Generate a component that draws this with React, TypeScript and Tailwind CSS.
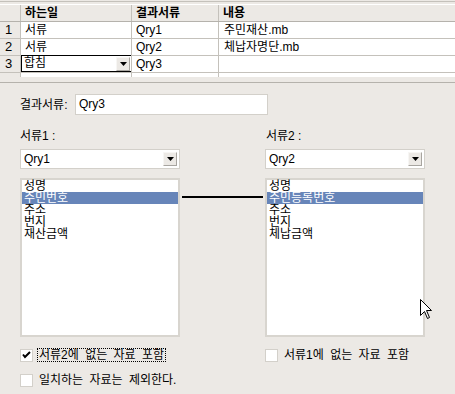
import React from 'react';

const font = "font-['Liberation_Sans','Noto_Sans_CJK_KR',sans-serif]";

const Arrow: React.FC = () => (
  <svg width="7" height="4" viewBox="0 0 7 4">
    <path d="M0 0h7L3.5 4z" fill="#000" />
  </svg>
);

const DropButton: React.FC = () => (
  <div className="w-[14px] h-[14px] flex items-center justify-center bg-[#ece9e5] border border-t-[#f7f6f4] border-l-[#f7f6f4] border-b-[#a8a5a0] border-r-[#a8a5a0]">
    <Arrow />
  </div>
);

const rows = [
  { n: '1', task: '서류', result: 'Qry1', content: '주민재산.mb' },
  { n: '2', task: '서류', result: 'Qry2', content: '체납자명단.mb' },
  { n: '3', task: '합침', result: 'Qry3', content: '' },
];

const Grid: React.FC = () => (
  <div className="h-[82px] border-b border-[#b5b2ac]">
    <div className="mt-[1px] border-t border-[#c4c1bb] pt-[2px]">
      <div className="grid grid-cols-[21px_111px_87px_1fr] h-[18px] border-t border-white border-b border-b-[#b5b2ac] font-bold">
        <div className="border-r border-[#c4c1bb]" />
        <div className="border-r border-[#c4c1bb] pl-[4px] leading-[16px]">하는일</div>
        <div className="border-r border-[#c4c1bb] pl-[4px] leading-[16px]">결과서류</div>
        <div className="pl-[4px] leading-[16px]">내용</div>
      </div>
      {rows.map((r) => (
        <div key={r.n} className="grid grid-cols-[21px_111px_87px_1fr] h-[17px] border-b border-[#c4c1bb]">
          <div className="border-r border-[#c4c1bb] pl-[5px] leading-[16px] text-[13px]">{r.n}</div>
          {r.n === '3' ? (
            <div className="border-r border-[#c4c1bb] bg-white">
              <div className="h-[17px] -mt-[1px] border border-black border-r-0 flex items-center justify-between pl-[2px] pr-[1px]">
                <span className="leading-[15px]">{r.task}</span>
                <DropButton />
              </div>
            </div>
          ) : (
            <div className="border-r border-[#c4c1bb] bg-white pl-[4px] leading-[16px]">{r.task}</div>
          )}
          <div className="border-r border-[#c4c1bb] bg-white pl-[4px] leading-[16px]">{r.result}</div>
          <div className="bg-white pl-[5px] leading-[16px]">{r.content}</div>
        </div>
      ))}
      <div className="grid grid-cols-[21px_111px_87px_1fr] h-[4px]">
        <div className="border-r border-[#c4c1bb]" />
        <div className="border-r border-[#c4c1bb] bg-white" />
        <div className="border-r border-[#c4c1bb] bg-white" />
        <div className="bg-white" />
      </div>
    </div>
  </div>
);

const Select: React.FC<{ value: string }> = ({ value }) => (
  <div className="mt-[6px] h-[20px] bg-white border border-[#d3d0ca] flex items-center justify-between pl-[3px] pr-[2px]">
    <span>{value}</span>
    <DropButton />
  </div>
);

const ListBox: React.FC<{ items: string[]; selected: number }> = ({ items, selected }) => (
  <div className="mt-[9px] h-[159px] bg-white border-2 border-[#d8d5cf] leading-[12px]">
    {items.map((it, i) => (
      <div
        key={it}
        className={`h-[12px] pl-[2px] ${i === selected ? 'bg-[#6785b9] text-white' : 'text-black'}`}
      >
        {it}
      </div>
    ))}
  </div>
);

const Check: React.FC<{ checked?: boolean; label: string; focus?: boolean; className?: string }> = ({
  checked,
  label,
  focus,
  className,
}) => (
  <div className={`flex items-center h-[14px] ${className ?? ''}`}>
    <div className="w-[13px] h-[13px] shrink-0 bg-white border border-[#d3d0ca] flex items-center justify-center">
      {checked && (
        <svg width="9" height="8" viewBox="0 0 9 8">
          <path d="M1 3.5l2 2.5L8 1" stroke="#000" strokeWidth="2" fill="none" />
        </svg>
      )}
    </div>
    <span
      className={`ml-[4px] leading-[12px] px-[1px] whitespace-nowrap [word-spacing:3px] border ${focus ? 'border-dotted border-black' : 'border-transparent'}`}
    >
      {label}
    </span>
  </div>
);

const App: React.FC = () => {
  return (
    <div className={`relative w-[455px] h-[394px] overflow-hidden bg-[#ece9e5] text-black text-[12px] ${font}`}>
      <Grid />

      <div className="px-[20px] pt-[11px]">
        <div className="flex items-center h-[21px]">
          <span className="w-[55px]">결과서류:</span>
          <div className="w-[193px] h-[21px] bg-white border border-[#d3d0ca] pl-[3px] leading-[19px]">Qry3</div>
        </div>

        <div className="flex mt-[14px]">
          <div className="w-[160px]">
            <div className="h-[14px] leading-[14px]">서류1 :</div>
            <Select value="Qry1" />
            <ListBox items={['성명', '주민번호', '주소', '번지', '재산금액']} selected={1} />
            <Check className="mt-[11px]" checked focus label="서류2에 없는 자료 포함" />
            <Check className="mt-[11px]" label="일치하는 자료는 제외한다." />
          </div>

          <div className="w-[85px] px-[2px]">
            <div className="mt-[67px] h-[2px] bg-black" />
          </div>

          <div className="w-[160px]">
            <div className="h-[14px] leading-[14px] pl-[1px]">서류2 :</div>
            <Select value="Qry2" />
            <ListBox items={['성명', '주민등록번호', '주소', '번지', '체납금액']} selected={1} />
            <Check className="mt-[11px]" label="서류1에 없는 자료 포함" />
          </div>
        </div>
      </div>

      <svg className="absolute left-[420px] top-[299px]" width="13" height="21" viewBox="0 0 13 21">
        <path
          d="M0.5 0.5V16.5L4.5 12.5L7.5 19.5L9.5 18.5L6.5 11.5H11.5Z"
          fill="#fff"
          stroke="#000"
          strokeWidth="1"
          strokeLinejoin="miter"
        />
      </svg>
    </div>
  );
};

export default App;
